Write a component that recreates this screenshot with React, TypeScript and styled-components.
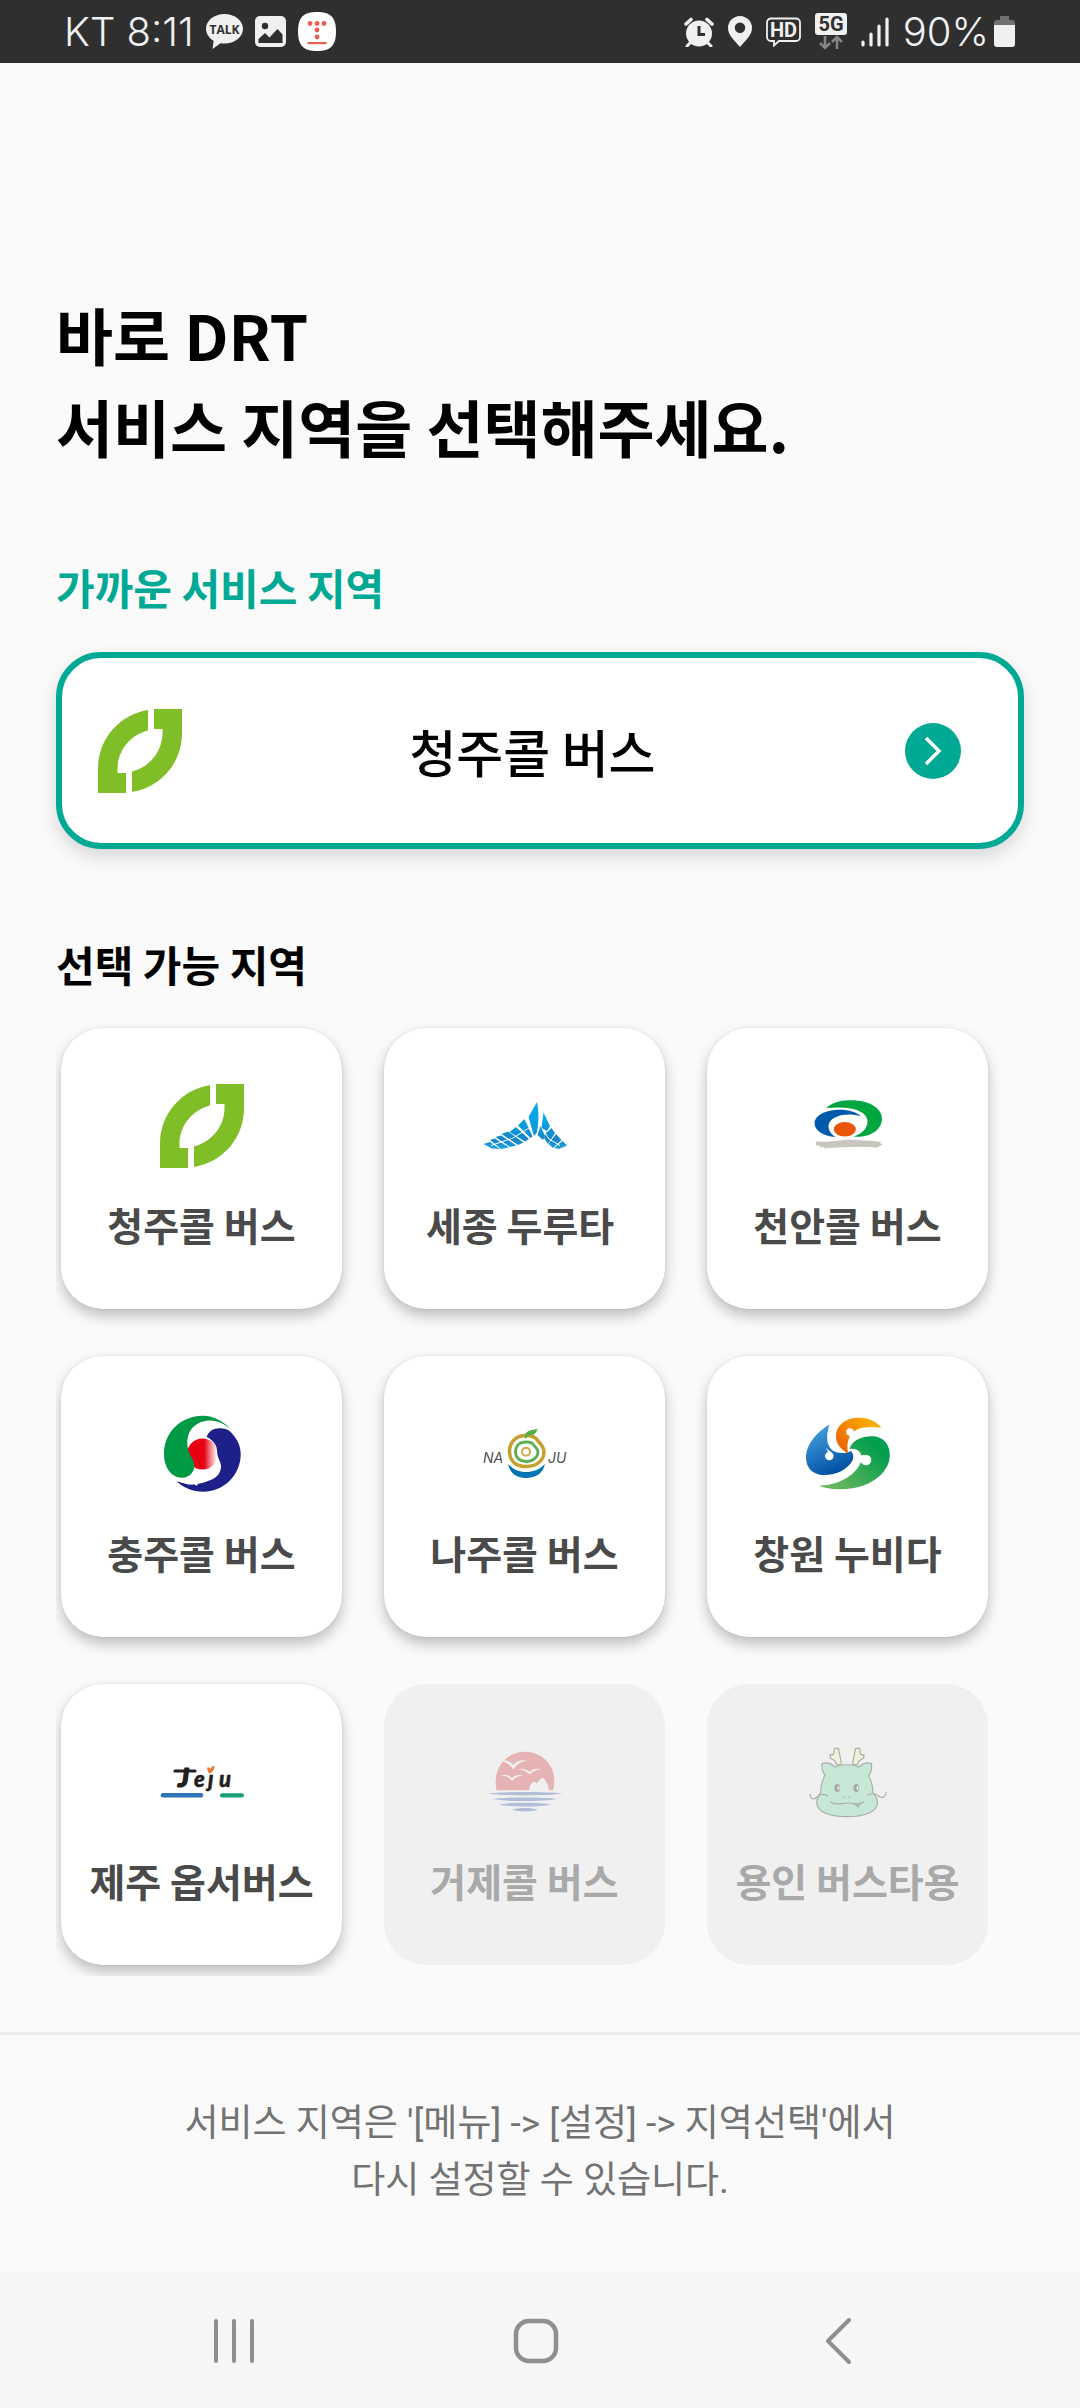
import React from "react";
import styled, { createGlobalStyle } from "styled-components";

const GlobalStyle = createGlobalStyle`
  *, *::before, *::after { box-sizing: border-box; }
  html, body { margin: 0; padding: 0; }
  body {
    background: #fafafa;
    color: #000;
    font-family: "Noto Sans CJK KR", "Noto Sans", sans-serif;
  }
  h1, h2, p, ul { margin: 0; padding: 0; }
  button { font: inherit; color: inherit; border: 0; padding: 0; cursor: pointer; }
  svg { display: block; flex: none; }
`;

const Screen = styled.div`
  display: flex;
  flex-direction: column;
  min-height: 100vh;
`;

const StatusBar = styled.header`
  display: flex;
  align-items: center;
  justify-content: space-between;
  height: 63px;
  padding: 0 65px 0 64px;
  background: #2f2f2f;
  color: #f0f0f0;
  font-family: Inter, sans-serif;
  font-size: 40px;
  font-weight: 300;
  line-height: 63px;
  white-space: nowrap;
`;

const StatusGroup = styled.div<{ $gap: number }>`
  display: flex;
  align-items: center;
  gap: ${(p) => p.$gap}px;
`;

const BatteryGroup = styled.div`
  display: flex;
  align-items: center;
  gap: 5px;
`;

const Main = styled.main`
  flex: 1;
  padding: 225px 56px 56px;
`;

const Title = styled.h1`
  font-size: 62px;
  font-weight: 700;
  line-height: 92px;
`;

const SectionTitle = styled.h2<{ $accent?: boolean }>`
  margin: 85px 0 35px;
  font-size: 42px;
  font-weight: 700;
  line-height: 60px;
  color: ${(p) => (p.$accent ? "#00a994" : "#000")};
`;

const NearestButton = styled.button`
  display: flex;
  align-items: center;
  width: 100%;
  height: 197px;
  padding: 0 57px 0 36px;
  border: 6px solid #00a994;
  border-radius: 45px;
  background: #fff;
  box-shadow: 0 8px 18px rgba(0, 0, 0, 0.14);
`;

const NearestName = styled.span`
  flex: 1;
  padding-right: 22px;
  font-size: 51px;
  font-weight: 500;
  line-height: 72px;
  text-align: center;
`;

const RegionGrid = styled.ul`
  display: grid;
  grid-template-columns: repeat(3, minmax(0, 1fr));
  gap: 47px 42px;
  margin-top: -5px;
  padding: 4px 36px 11px 5px;
  overflow: hidden;
  list-style: none;
`;

const RegionCard = styled.button`
  display: flex;
  flex-direction: column;
  align-items: center;
  gap: 27px;
  width: 100%;
  aspect-ratio: 1;
  padding-top: 56px;
  border-radius: 42px;
  background: #fff;
  color: #4a4a4a;
  box-shadow: 0 7px 14px rgba(0, 0, 0, 0.24), 0 0 3px rgba(0, 0, 0, 0.08);

  &:disabled {
    background: #f0f0f0;
    color: #a9a9a9;
    box-shadow: none;
    cursor: default;
  }
`;

const RegionName = styled.span`
  font-size: 39px;
  font-weight: 700;
  line-height: 58px;
  white-space: pre;
`;

const Notice = styled.footer`
  padding: 60px 56px 64px;
  border-top: 3px solid #ebebeb;
  color: #737373;
  font-family: Roboto, "Noto Sans CJK KR", sans-serif;
  font-size: 37px;
  line-height: 57px;
  text-align: center;
`;

const NavBar = styled.nav`
  display: grid;
  grid-template-columns: repeat(3, 1fr);
  height: 135px;
  padding: 0 91px 0 83px;
  background: #f6f6f8;
`;

const NavButton = styled.button`
  display: flex;
  align-items: center;
  justify-content: center;
  background: transparent;
`;

/* Status bar icons */

const TalkIcon = () => (
  <svg width="37" height="37" viewBox="0 0 37 37" aria-hidden="true">
    <path d="M18.5 1C8.300 1 0 7.500 0 15.700c0 5 3 9.300 7.600 12L6.500 36l8-5.700c1.300.2 2.600.3 4 .3C28.700 30.600 37 24 37 15.700S28.700 1 18.500 1Z" fill="#f0f0f0" />
    <text x="18.500" y="20.500" textAnchor="middle" fontFamily="Open Sans, sans-serif" fontSize="12" fontWeight="700" fill="#2f2f2f">TALK</text>
  </svg>
);

const PictureIcon = () => (
  <svg width="31" height="31" viewBox="0 0 31 31" aria-hidden="true">
    <rect width="31" height="31" rx="5" fill="#f0f0f0" />
    <circle cx="10" cy="10" r="3.200" fill="#2f2f2f" />
    <path d="M3.500 23 10 17l4.500 4.500L22.500 13l5 5.500V27h-24Z" fill="#2f2f2f" strokeLinejoin="round" />
  </svg>
);

const TmapIcon = () => (
  <svg width="38" height="39" viewBox="0 0 38 39" aria-hidden="true">
    <path d="M19 0C32 0 38 5 38 19.500S32 39 19 39 0 34 0 19.500 6 0 19 0Z" fill="#fff" />
    <g fill="#e8604f">
      <circle cx="12" cy="11.500" r="2.400" />
      <circle cx="19" cy="11.500" r="2.400" />
      <circle cx="26" cy="11.500" r="2.400" />
      <circle cx="19" cy="18" r="2.400" />
      <circle cx="19" cy="25" r="2.400" />
      <rect x="9.500" y="30" width="19" height="2.200" />
    </g>
  </svg>
);

const AlarmIcon = () => (
  <svg width="30" height="30" viewBox="0 0 30 30" aria-hidden="true">
    <path d="M2 7 7 2.500M28 7l-5-4.500" stroke="#f0f0f0" strokeWidth="3.600" strokeLinecap="round" />
    <path d="m6 26-3 3M24 26l3 3" stroke="#f0f0f0" strokeWidth="3" strokeLinecap="round" />
    <circle cx="15" cy="16.500" r="13" fill="#f0f0f0" />
    <path d="M15 9v8.500h6" fill="none" stroke="#2f2f2f" strokeWidth="3" />
  </svg>
);

const PinIcon = () => (
  <svg width="24" height="31" viewBox="0 0 24 31" aria-hidden="true">
    <path fillRule="evenodd" d="M12 0a12 12 0 0 0-12 12c0 7 6 12 12 19 6-7 12-12 12-19A12 12 0 0 0 12 0Zm0 6.500a5 5 0 1 1 0 10.500 5 5 0 0 1 0-10.500Z" fill="#f0f0f0" />
  </svg>
);

const HdIcon = () => (
  <svg width="35" height="30" viewBox="0 0 35 30" aria-hidden="true">
    <path d="M5 1.500h25a4 4 0 0 1 4 4V20a4 4 0 0 1-4 4H13l-5 4.500V24H5a4 4 0 0 1-4-4V5.500a4 4 0 0 1 4-4Z" fill="none" stroke="#f0f0f0" strokeWidth="1.800" />
    <text x="17.500" y="20" textAnchor="middle" fontFamily="Roboto, sans-serif" fontSize="20" fontWeight="700" fill="#f0f0f0">HD</text>
  </svg>
);

const FiveGIcon = () => (
  <svg width="32" height="38" viewBox="0 0 32 38" aria-hidden="true">
    <rect width="32" height="22" rx="3" fill="#f0f0f0" />
    <text x="16" y="18" textAnchor="middle" fontFamily="Roboto, sans-serif" fontSize="20" fontWeight="700" fill="#2f2f2f">5G</text>
    <path d="M10 23v12M5 30l5 5 5-5M22 36V24M17 29l5-5 5 5" fill="none" stroke="#858585" strokeWidth="2.600" />
  </svg>
);

const SignalIcon = () => (
  <svg width="28" height="30" viewBox="0 0 28 30" aria-hidden="true">
    <path d="M2 25v3M10 17v11M18 9v19M26 2v26" stroke="#f0f0f0" strokeWidth="3.200" strokeLinecap="round" />
  </svg>
);

const BatteryIcon = () => (
  <svg width="21" height="32" viewBox="0 0 21 32" aria-hidden="true">
    <path d="M6 0h9v4h3a3 3 0 0 1 3 3v3H0V7a3 3 0 0 1 3-3h3Z" fill="#707070" />
    <path d="M0 9h21v19a3 3 0 0 1-3 3H3a3 3 0 0 1-3-3Z" fill="#f0f0f0" />
  </svg>
);

const ArrowIcon = () => (
  <svg width="56" height="56" viewBox="0 0 56 56" aria-hidden="true">
    <circle cx="28" cy="28" r="28" fill="#00a994" />
    <path d="M21 15 34 28 21 41" fill="none" stroke="#fff" strokeWidth="3.500" />
  </svg>
);

/* Region emblems, all on an 84 × 84 board */

const Emblem = ({ children }: { children: React.ReactNode }) => (
  <svg width="84" height="84" viewBox="0 0 84 84" aria-hidden="true">
    {children}
  </svg>
);

const LEAF = "M50 1V21.500C32 26 19.500 42 19.500 60V64H28V84H0V60C0 30 21 6 50 1Z";

const Cheongju = () => (
  <Emblem>
    <g fill="#80be27">
      <path d={LEAF} />
      <path d={LEAF} transform="rotate(180 42 42)" />
    </g>
  </Emblem>
);

const Sejong = () => (
  <Emblem>
    <defs>
      <linearGradient id="sejong" x1="0" y1="18" x2="0" y2="65" gradientUnits="userSpaceOnUse">
        <stop offset="0.350" stopColor="#06a7e4" />
        <stop offset="0.800" stopColor="#1585c8" />
        <stop offset="1" stopColor="#1fa5df" />
      </linearGradient>
    </defs>
    <g fill="url(#sejong)">
      <path d="M54 18 45.500 33 51 52 54 48C56 38 56 28 54 18Z" />
      <path d="M41.500 35 35 41.500 47.500 54 49.500 52.500Z" />
      <path d="M33 43 26.500 48 42 57.500 46 55Z" />
      <path d="M25 47.500 18.500 50 35 61 40.500 58.500Z" />
      <path d="M18 51.500 12.500 53 27 63 33.500 61.500Z" />
      <path d="M12 54.500 7 56 18 65 26 63.500Z" />
      <path d="M7 58 .5 60 9 64.500 17 65Z" />
      <path d="M60.500 28.500 58.500 44 64 47 67 42Z" />
      <path d="M57.500 42 54.500 51 60 56 62 52Z" />
      <path d="M68.500 44 63 49 61 54 65 60 72 49Z" />
      <path d="M73 50 65.500 60 70 64 78.500 56Z" />
      <path d="M79.500 57 71 64 76 65 84 61.500Z" />
    </g>
    <path d="M8 61.500 30 54 46 44M60 46 66 55 77 61.500" fill="none" stroke="#fff" strokeWidth="1" />
  </Emblem>
);

const Cheonan = () => (
  <Emblem>
    <path d="M20 24C29 17 37 16.300 45 16.300 64 16.300 76 25 76 34.500 76 46 64 54 47.500 52.700 57 49 61.500 44 61.500 37.500 61.500 28 48 21.500 20 24Z" fill="#00a63f" />
    <path d="M29.500 53C17 52.500 8.600 46 8.600 39.500 8.600 31 20 25.700 34 25.700 43 25.700 50 28 55 32 38 27.500 22.500 33 22.500 42 22.500 46.500 25 50 29.500 53Z" fill="#005bac" />
    <ellipse cx="38.800" cy="45.300" rx="11" ry="7.200" fill="#ea5509" />
    <path d="M9.500 57.500C30 58.500 38 54.500 50 56c10 1 18 .5 26 2l-2.500 1.500 3 .8-5 3.200C55 62 35 63 17.600 64.500L19 63l-5.500.5 1-2-4 .2Z" fill="#c8c4bf" />
  </Emblem>
);

const Chungju = () => (
  <Emblem>
    <defs>
      <linearGradient id="chungju" x1="27" y1="0" x2="58" y2="0" gradientUnits="userSpaceOnUse">
        <stop offset="0.550" stopColor="#e60012" />
        <stop offset="0.970" stopColor="#fff" />
      </linearGradient>
    </defs>
    <circle cx="42.500" cy="42" r="15.500" fill="url(#chungju)" />
    <path d="M72 18.500C65 10 54 3.700 43 3.700 21 3.700 4 20 4 42c0 13 7 23.700 18 23.700 8 0 13.500-7 12.300-13.700C33 45.500 27.300 42 27.300 31 27.300 17 37 8.500 50 8.500c8 0 16 4 22 10Z" fill="#009a44" />
    <path d="M46.700 25C48 19 55 15.500 61 16.300c5 0 9 2.200 11.700 6 5 6 8 12 8 19.700C80.700 63 64 79.800 43 79.800 33 79.800 24 76 16 69l12 3.500C36 73 42 71.500 48 69c8-2 13-8 13-14.500C61 49 57 47 57 38 56.500 32 52 27.500 46.700 25Z" fill="#1d2088" />
    <path d="M15 68.500 38 73" stroke="#fff" strokeWidth="1.200" strokeDasharray="3 2" />
  </Emblem>
);

const Naju = () => (
  <Emblem>
    <path d="M25 52c6 6 11 8 18 8s13-2 19-8c-2 9-9 14-19 14S27 61 25 52Z" fill="#0075b5" />
    <path d="M43 23.500c7 0 10 2 12 5.500 3 3 6 6 6 11 0 8-7 14.500-18 14.500S26.500 48 26.500 39.500C26.500 30 33 23.500 43 23.500Z" fill="#fff" stroke="#c6a02c" strokeWidth="3.500" />
    <path d="M43 30c5 0 7 1 8 3.500 2 2 4 4 4 6.500 0 5-5 9.500-12 9.500S32.500 45 32.500 39.700 36 30 43 30Z" fill="none" stroke="#5bb14f" strokeWidth="2.800" />
    <circle cx="43" cy="39.700" r="4" fill="none" stroke="#d0a944" strokeWidth="2" />
    <path d="M42.500 27C40 20 46 18 54.500 17 53 22 50 23.500 45.500 23.500L42.500 27Z" fill="#57ad47" />
    <g fontFamily="Inter, sans-serif" fontSize="14" fontStyle="italic" fontWeight="400" fill="#4d4d4d">
      <text x="0" y="50.500">NA</text>
      <text x="65" y="50.500">JU</text>
    </g>
  </Emblem>
);

const Changwon = () => (
  <Emblem>
    <defs>
      <linearGradient id="cwBlue" x1="10" y1="20" x2="30" y2="62" gradientUnits="userSpaceOnUse">
        <stop offset="0" stopColor="#3c98d6" />
        <stop offset="1" stopColor="#004ea2" />
      </linearGradient>
      <linearGradient id="cwOrange" x1="34" y1="36" x2="62" y2="8" gradientUnits="userSpaceOnUse">
        <stop offset="0" stopColor="#ec6500" />
        <stop offset="1" stopColor="#faab00" />
      </linearGradient>
      <linearGradient id="cwGreen" x1="72" y1="34" x2="32" y2="78" gradientUnits="userSpaceOnUse">
        <stop offset="0" stopColor="#009e4f" />
        <stop offset="1" stopColor="#68b65c" />
      </linearGradient>
    </defs>
    <path d="M23.500 12.500C20 23 20 33 26.500 38.500c4 3 13 3.500 18 .5 3 2 3.500 6 2 9.500C42 57 31 63 18 63 6 63 0 55 0 46 0 32 11 20 23.500 12.500Z" fill="url(#cwBlue)" />
    <path d="M42 41.500C34 37 30 31 30 24.500 30 13 40 5.700 52.500 5.700c10 0 17 3 23 10-16-2-28 0-32 9.300C41 30 41 36 42 41.500Z" fill="url(#cwOrange)" />
    <path d="M43.500 37C46 28 56 24.300 66 24.300c11 0 17.800 8 17.800 18.700C83.800 62 62 77.300 35 77.300 25 77.300 18 76 13.500 73.500 34 73 50 63 55.500 49 57 40 51 36 43.500 37Z" fill="url(#cwGreen)" />
    <g fill="#fff">
      <circle cx="23.300" cy="44" r="4.300" />
      <path d="m20 36 5 4 1 3-3-1Z" />
      <circle cx="44" cy="20" r="3.800" />
      <path d="m43 22 6 2-4 4Z" />
      <circle cx="60" cy="48" r="5.300" />
      <path d="m53 44 5-1v9l-4-2Z" />
    </g>
  </Emblem>
);

const Jeju = () => (
  <Emblem>
    <rect x=".7" y="53" width="42.600" height="4.500" rx="2.200" fill="#2f73b9" />
    <rect x="60" y="53.200" width="24" height="4.300" rx="2.100" fill="#16a075" />
    <g fontFamily="Lato, sans-serif" fontWeight="900" fontStyle="italic" fill="#231f20" stroke="#231f20" strokeLinejoin="round">
      <text x="18" y="47" fontSize="27" strokeWidth="1.200">J</text>
      <text x="34 48 59" y="47" fontSize="22" strokeWidth=".5">eȷu</text>
    </g>
    <path d="M15 31H35" stroke="#231f20" strokeWidth="3.200" strokeLinecap="round" />
    <path d="M49.500 34C47 30 46.500 27.500 48 27.300c1.200 0 1.800 1 2.300 2.400C51 27 52.500 25.500 54 26c1.500 1-1 6-4.500 8Z" fill="#ee7623" />
  </Emblem>
);

const Geoje = () => (
  <Emblem>
    <path d="M13.500 50.300C9 30 22 11.700 42 11.700S76 30 70 50.300H66C65 45 63 40 60 38c-3 0-4 3-6 5.500-1-1-2-2-3.500-1.500C48 43 46.500 46 46 50.300Z" fill="#e6b3b5" />
    <g fill="#f0f0f0">
      <path d="M15 20.500c8-1.500 12 1 15.500 4.500C34 20.500 39 19.500 45 21c-7 0-11 3-14.500 8.500C27 24 22 21 15 20.500Z" />
      <path d="M34 29.500c6-1.500 10 0 12.500 2.500 3-3 7-4 12.500-2.500-6 0-9 2-12.500 5C43 31 40 29.500 34 29.500Z" />
      <path d="M17.500 35.500c5-1 9 0 11.500 2.500 3-3 6-3.500 11.500-2.500-5 0-8 2-11.500 5.500C26 37 23 35.500 17.500 35.500Z" />
    </g>
    <g fill="#b1bdd9">
      <path d="M4.700 53.500C20 51.500 64 51.500 79.500 53.500 64 56 20 56 4.700 53.500Z" />
      <path d="M10 59C24 57 60 57 74 59 60 61.800 24 61.800 10 59Z" />
      <path d="M16 64.500C28 62 56 62 68.500 64.500 56 67.300 28 67.300 16 64.500Z" />
      <path d="M29 69.700C36 67.500 48 67.500 55 69.700 48 72 36 72 29 69.700Z" />
    </g>
  </Emblem>
);

const HORN = "M28.500 8.300H32.500L35.500 24 30.500 25 29 20.700 24.500 18.300 24 14.700H27.400Z";

const Yongin = () => (
  <Emblem>
    <g stroke="#aaaeab" strokeWidth="1.200" strokeLinejoin="round" strokeLinecap="round">
      <path d={HORN} fill="#f3f0d8" />
      <path d={HORN} fill="#f3f0d8" transform="translate(82 0) scale(-1 1)" />
      <path d="M16 23.500C21 22 25 23 29 27 36 24 46 24 53 27 57 23 61 22 65.500 23.500 66 29 65 33 62.500 36 66 42 67 47 67 53 70 56 71.500 59 71.500 63 71 72 58 76.700 41 76.700S11 72 10.700 63C10.700 59 12 56 14.500 53 14.500 47 16 41 19 35 16.500 32 15.500 28 16 23.500Z" fill="#c7e7d7" />
      <path d="M4 54.500c.5 5 4 5.500 7 2.500 4-3.500 7-3.500 10.500-1M80 52.500c-1 6-5 6-8 3-3.500-2.500-7-2.500-10-.5M25 62c4 4 10 1 17 1 6 0 10 3 15.500-1M49 64l3.300 3 1.700-3.500" fill="none" />
    </g>
    <g fill="#a5a9a6">
      <ellipse cx="31.300" cy="48" rx="2.800" ry="4" />
      <ellipse cx="50.300" cy="48" rx="2.800" ry="4" />
      <circle cx="38.500" cy="57" r=".8" />
      <circle cx="43.500" cy="57" r=".8" />
    </g>
    <ellipse cx="32.500" cy="48" rx="1" ry="2" fill="#eef3f0" />
    <ellipse cx="51.500" cy="48" rx="1" ry="2" fill="#eef3f0" />
  </Emblem>
);

/* Navigation icons */

const RecentsIcon = () => (
  <svg width="44" height="46" viewBox="0 0 44 46" aria-hidden="true">
    <path d="M4 3v40M22 3v40M40 3v40" stroke="#8f8f8f" strokeWidth="4" strokeLinecap="round" />
  </svg>
);

const HomeIcon = () => (
  <svg width="46" height="46" viewBox="0 0 46 46" aria-hidden="true">
    <rect x="3" y="3" width="40" height="40" rx="13" fill="none" stroke="#8f8f8f" strokeWidth="4.500" />
  </svg>
);

const BackIcon = () => (
  <svg width="28" height="46" viewBox="0 0 28 46" aria-hidden="true">
    <path d="M25 2 4 23l21 21" fill="none" stroke="#8f8f8f" strokeWidth="4" strokeLinecap="round" strokeLinejoin="round" />
  </svg>
);

type Region = { name: string; Logo: () => React.ReactElement; disabled?: boolean };

const regions: Region[] = [
  { name: "청주콜 버스", Logo: Cheongju },
  { name: "세종 두루타 ", Logo: Sejong },
  { name: "천안콜 버스", Logo: Cheonan },
  { name: "충주콜 버스", Logo: Chungju },
  { name: "나주콜 버스", Logo: Naju },
  { name: "창원 누비다", Logo: Changwon },
  { name: "제주 옵서버스", Logo: Jeju },
  { name: "거제콜 버스", Logo: Geoje, disabled: true },
  { name: "용인 버스타용", Logo: Yongin, disabled: true },
];

export default function App() {
  return (
    <>
      <GlobalStyle />
      <Screen>
        <StatusBar>
          <StatusGroup $gap={12}>
            <span>KT 8:11</span>
            <TalkIcon />
            <PictureIcon />
            <TmapIcon />
          </StatusGroup>
          <StatusGroup $gap={14}>
            <AlarmIcon />
            <PinIcon />
            <HdIcon />
            <FiveGIcon />
            <SignalIcon />
            <BatteryGroup>
              <span>90%</span>
              <BatteryIcon />
            </BatteryGroup>
          </StatusGroup>
        </StatusBar>

        <Main>
          <Title>
            바로 DRT
            <br />
            서비스 지역을 선택해주세요.
          </Title>

          <SectionTitle $accent>가까운 서비스 지역</SectionTitle>
          <NearestButton type="button">
            <Cheongju />
            <NearestName>청주콜 버스</NearestName>
            <ArrowIcon />
          </NearestButton>

          <SectionTitle>선택 가능 지역</SectionTitle>
          <RegionGrid>
            {regions.map(({ name, Logo, disabled }) => (
              <li key={name}>
                <RegionCard type="button" disabled={disabled}>
                  <Logo />
                  <RegionName>{name}</RegionName>
                </RegionCard>
              </li>
            ))}
          </RegionGrid>
        </Main>

        <Notice>
          <p>
            서비스 지역은 '[메뉴] -&gt; [설정] -&gt; 지역선택'에서
            <br />
            다시 설정할 수 있습니다.
          </p>
        </Notice>

        <NavBar aria-label="시스템">
          <NavButton type="button" aria-label="최근 앱">
            <RecentsIcon />
          </NavButton>
          <NavButton type="button" aria-label="홈">
            <HomeIcon />
          </NavButton>
          <NavButton type="button" aria-label="뒤로">
            <BackIcon />
          </NavButton>
        </NavBar>
      </Screen>
    </>
  );
}
